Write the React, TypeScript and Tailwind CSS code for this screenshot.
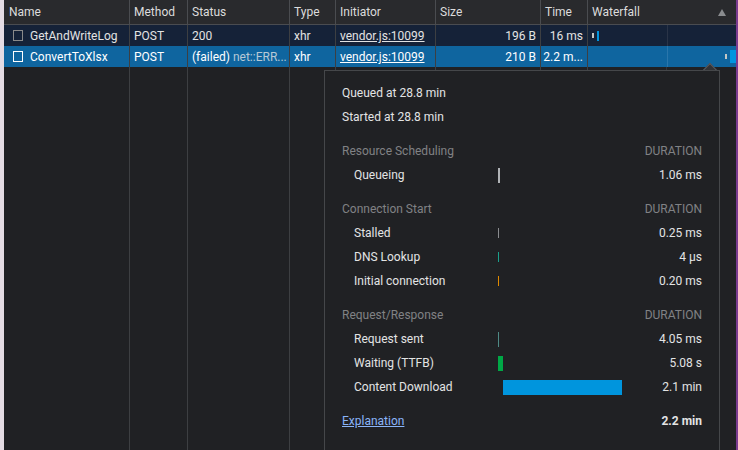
const cols = [
  { label: 'Name', w: 'w-[126px]' },
  { label: 'Method', w: 'w-[58px]' },
  { label: 'Status', w: 'w-[102px]' },
  { label: 'Type', w: 'w-[46px]' },
  { label: 'Initiator', w: 'w-[100px]' },
  { label: 'Size', w: 'w-[105px]' },
  { label: 'Time', w: 'w-[47px]' },
]

function Row({ name, status, size, time, selected }: { name: string; status: React.ReactNode; size: string; time: string; selected?: boolean }) {
  return (
    <div className={`flex h-[21px] items-center text-[12px] leading-[23px] ${selected ? 'bg-[#0f659f] text-white' : 'bg-[#152238] text-[#e3e3e3]'}`}>
      <div className="flex w-[126px] items-start border-r border-[#3d3f42] h-full pl-[9px]">
        <span className={`mr-[7px] h-[11px] w-[10px] self-center border ${selected ? 'border-white' : 'border-[#8a8a8a]'}`} />
        {name}
      </div>
      <div className="w-[58px] h-full border-r border-[#3d3f42] pl-[4px]">POST</div>
      <div className="w-[102px] h-full border-r border-[#3d3f42] pl-[4px] whitespace-nowrap overflow-hidden">{status}</div>
      <div className="w-[46px] h-full border-r border-[#3d3f42] pl-[4px]">xhr</div>
      <div className="w-[100px] h-full border-r border-[#3d3f42] pl-[4px] underline">vendor.js:10099</div>
      <div className="w-[105px] h-full border-r border-[#3d3f42] pr-[4px] text-right">{size}</div>
      <div className="w-[47px] h-full border-r border-[#3d3f42] pr-[4px] text-right whitespace-nowrap">{time}</div>
      <div className="flex-1 h-full relative">
        <div className={`absolute top-0 bottom-0 left-[79px] w-px ${selected ? 'bg-[#2a76ab]' : 'bg-[#2a3447]'}`} />
        {selected ? (
          <>
            <div className="absolute left-[137px] top-[8px] h-[5px] w-[2px] bg-[#c4c7c5]" />
            <div className="absolute left-[142px] top-[4px] h-[13px] w-[6px] bg-[#0095e0]" />
          </>
        ) : (
          <>
            <div className="absolute left-[4px] top-[8px] h-[5px] w-[2px] bg-[#c4c7c5]" />
            <div className="absolute left-[9px] top-[6px] h-[10px] w-[2px] bg-[#0095e0]" />
          </>
        )}
      </div>
    </div>
  )
}

function Section({ title }: { title: string }) {
  return (
    <div className="flex justify-between h-[24px] leading-[24px] text-[#808285]">
      <span>{title}</span>
      <span>DURATION</span>
    </div>
  )
}

function Phase({ label, value, bar }: { label: string; value: string; bar: React.ReactNode }) {
  return (
    <div className="flex h-[24px] items-center text-[#e3e4e4]">
      <span className="w-[144px] pl-[12px]">{label}</span>
      <div className="relative h-[15px] w-[124px] flex items-center">{bar}</div>
      <span className="flex-1 text-right">{value}</span>
    </div>
  )
}

export default function App() {
  return (
    <div className="relative flex h-[450px] w-[738px] overflow-hidden bg-[#202124] text-[12px] font-['Roboto','Open_Sans',sans-serif]">
      <div className="w-[4px] bg-[#e4dce4]" />
      <div className="flex-1 flex flex-col relative">
        <div className="flex h-[25px] items-center bg-[#292a2d] border-b border-[#4a4c50] text-[#dcdcdc] leading-[25px]">
          {cols.map((c) => (
            <div key={c.label} className={`${c.w} h-full border-r border-[#4a4c50] ${c.label === 'Name' ? 'pl-[5px]' : 'pl-[4px]'}`}>{c.label}</div>
          ))}
          <div className="flex-1 flex justify-between pl-[4px] pr-[10px] items-center">
            <span>Waterfall</span>
            <span className="h-0 w-0 border-x-[4px] border-b-[7px] border-x-transparent border-b-[#8a8c8f]" />
          </div>
        </div>
        <Row name="GetAndWriteLog" status="200" size="196 B" time="16 ms" />
        <Row name="ConvertToXlsx" selected size="210 B" time="2.2 m..." status={<>(failed) <span className="text-[#b7c9d6]">net::ERR...</span></>} />
        <div className="flex-1 flex">
          {cols.map((c) => (
            <div key={c.label} className={`${c.w} border-r border-[#3d3f42]`} />
          ))}
          <div className="w-[79px] border-r border-[#333538]" />
        </div>
      </div>
      <div className="w-[2px] bg-[#7a3b8f]" />

      {/* timing popover */}
      <div className="absolute left-[324px] top-[70px] w-[396px] h-[390px] bg-[#202124] border border-[#45474a] px-[17px] pt-[10px]">
        <div className="absolute -top-[8px] right-[2px] h-[7px] w-[15px] overflow-hidden">
          <div className="mx-auto mt-[2px] h-[10px] w-[10px] rotate-45 border-l border-t border-[#5a5c60] bg-[#323336]" />
        </div>
        <div className="h-[24px] leading-[24px] text-[#e3e4e4]">Queued at 28.8 min</div>
        <div className="h-[24px] mb-[10px] leading-[24px] text-[#e3e4e4]">Started at 28.8 min</div>
        <Section title="Resource Scheduling" />
        <Phase label="Queueing" value="1.06 ms" bar={<div className="absolute left-[12px] h-[15px] w-[2px] bg-[#b0b3b6]" />} />
        <div className="h-[10px]" />
        <Section title="Connection Start" />
        <Phase label="Stalled" value="0.25 ms" bar={<div className="absolute left-[12px] h-[10px] w-px bg-[#8a8c8f]" />} />
        <Phase label="DNS Lookup" value="4 µs" bar={<div className="absolute left-[12px] h-[10px] w-px bg-[#1aa08c]" />} />
        <Phase label="Initial connection" value="0.20 ms" bar={<div className="absolute left-[12px] h-[10px] w-px bg-[#e08a00]" />} />
        <div className="h-[10px]" />
        <Section title="Request/Response" />
        <Phase label="Request sent" value="4.05 ms" bar={<div className="absolute left-[12px] h-[15px] w-px bg-[#4f8a86]" />} />
        <Phase label="Waiting (TTFB)" value="5.08 s" bar={<div className="absolute left-[12px] h-[15px] w-[5px] bg-[#00a846]" />} />
        <Phase label="Content Download" value="2.1 min" bar={<div className="absolute left-[17px] h-[15px] w-[119px] bg-[#0095dd]" />} />
        <div className="mt-[10px] flex justify-between h-[24px] leading-[24px]">
          <span className="text-[#8ab4f8] underline">Explanation</span>
          <span className="font-bold text-[#e3e4e4]">2.2 min</span>
        </div>
      </div>
    </div>
  )
}
